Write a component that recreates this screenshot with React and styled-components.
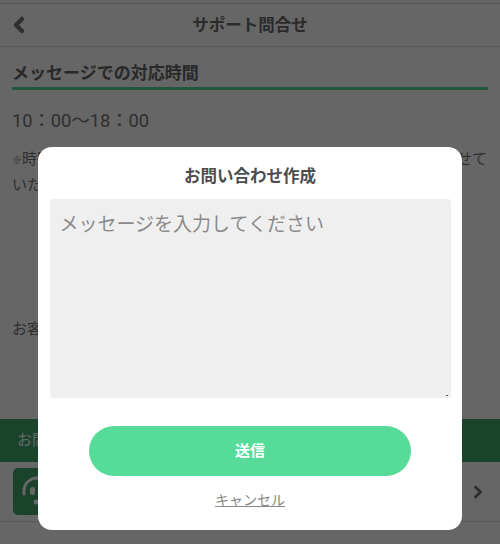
import React from "react";
import styled, { createGlobalStyle } from "styled-components";
import { ChevronLeft, ChevronRight } from "lucide-react";

const Global = createGlobalStyle`
  html, body { margin: 0; padding: 0; background: #fff; }
  body { font-family: "Roboto", "Noto Sans CJK JP", sans-serif; color: #333; overflow: hidden; }
  * { box-sizing: border-box; }
`;
const Page = styled.div`
  width: 500px; height: 544px; padding-top: 3px; overflow: hidden; display: flex; flex-direction: column;
`;
const TopRule = styled.div`height: 1px; background: #ccc; flex: none;`;
const Header = styled.header`
  height: 43px; flex: none; display: grid; grid-template-columns: 38px 1fr 38px; align-items: center;
  border-bottom: 1px solid #ddd; color: #777;
`;
const BackIcon = styled(ChevronLeft)`margin: -2px 0 0 7px;`;
const Title = styled.h1`margin: 0; text-align: center; font-size: 16.5px; line-height: 43px; font-weight: 700; color: #6c6c6c;`;
const Content = styled.main`padding: 14px 12px 0; flex: none; height: 372px;`;
const SectionTitle = styled.h2`
  margin: 0; font-size: 17px; line-height: 24px; padding-bottom: 2px; font-weight: 700; color: #666;
  border-bottom: 3px solid #5ad79a;
`;
const Hours = styled.p`margin: 18px 0 0; font-size: 18.3px; line-height: 26px; color: #777;`;
const Note = styled.p`margin: 13px 0 0; font-size: 15px; line-height: 24px; color: #777;`;
const NoteMark = styled.span`font-size: 10px;`;
const Customer = styled.p`margin: 120px 0 0; font-size: 15px; line-height: 24px; color: #777;`;
const GreenBar = styled.div`
  height: 43px; flex: none; background: #42a86c; color: #fff; font-size: 15px; line-height: 43px; padding-left: 17px;
`;
const SupportRow = styled.div`
  height: 60px; flex: none; display: flex; align-items: center; justify-content: space-between; padding: 0 12px 0 13px;
  border-bottom: 1px solid #ddd; color: #777;
`;
const IconBox = styled.div`
  width: 48px; height: 47px; border-radius: 5px; background: #42a86c; color: #fff;
`;
const Overlay = styled.div`
  position: fixed; inset: 0; background: rgba(0,0,0,.6); display: flex; justify-content: center; align-items: flex-start; padding-top: 147px;
`;
const Modal = styled.section`
  width: 424px; height: 383px; background: #fff; border-radius: 14px; padding: 0 12px;
  display: flex; flex-direction: column; align-items: stretch;
`;
const ModalTitle = styled.h2`margin: 0; font-size: 16.5px; line-height: 24px; height: 52px; padding-top: 18px; text-align: center; font-weight: 700; color: #4d4d4d;`;
const AreaWrap = styled.div`
  position: relative; width: 401px; height: 199px;
  &::after { content: ""; position: absolute; right: 3px; bottom: 2px; width: 2px; height: 1px; background: #555; }
`;
const Area = styled.textarea`
  display: block; width: 401px; height: 199px; border: 0; outline: 0; border-radius: 3px; background: #efefef; padding: 12px 10px 11px 9.5px;
  font: 19px/28px "Roboto", "Noto Sans CJK JP", sans-serif; color: #333; resize: none;
  &::placeholder { color: #8a8a8a; opacity: 1; }
`;
const Send = styled.button`
  display: block; width: 322px; height: 50px; margin: 28px auto 0; padding: 0 0 3px; border: 0; border-radius: 25px; background: #56db98; color: #fff;
  font: 700 15px "Roboto", "Noto Sans CJK JP", sans-serif;
`;
const Cancel = styled.a`
  display: block; margin-top: 14px; text-align: center; font-size: 14px; line-height: 20px; color: #888; text-decoration: underline;
`;

const Headset = () => (
  <svg width="48" height="47" viewBox="0 0 48 47" fill="none" stroke="currentColor" strokeWidth="3" strokeLinecap="round">
    <path d="M11 26v-3a13 13 0 0 1 26 0v3" />
    <rect x="17" y="19" width="5" height="8" rx="2.5" fill="currentColor" stroke="none" />
    <rect x="26" y="19" width="5" height="8" rx="2.5" fill="currentColor" stroke="none" />
    <circle cx="23" cy="34" r="2.5" fill="currentColor" stroke="none" />
  </svg>
);

export default function App() {
  return (
    <>
      <Global />
      <Page>
        <TopRule />
        <Header>
          <BackIcon size={24} strokeWidth={4.5} />
          <Title>サポート問合せ</Title>
          <span />
        </Header>
        <Content>
          <SectionTitle>メッセージでの対応時間</SectionTitle>
          <Hours>10：00〜18：00</Hours>
          <Note><NoteMark>※</NoteMark>時間外にいただいたお問い合わせは、翌営業日以降に順次対応させていただきます。</Note>
          <Customer>お客様のご質問にお答えします。</Customer>
        </Content>
        <GreenBar>お問い合わせ</GreenBar>
        <SupportRow>
          <IconBox><Headset /></IconBox>
          <ChevronRight size={20} strokeWidth={3.5} />
        </SupportRow>
      </Page>
      <Overlay>
        <Modal>
          <ModalTitle>お問い合わせ作成</ModalTitle>
          <AreaWrap>
            <Area placeholder="メッセージを入力してください" />
          </AreaWrap>
          <Send>送信</Send>
          <Cancel>キャンセル</Cancel>
        </Modal>
      </Overlay>
    </>
  );
}
